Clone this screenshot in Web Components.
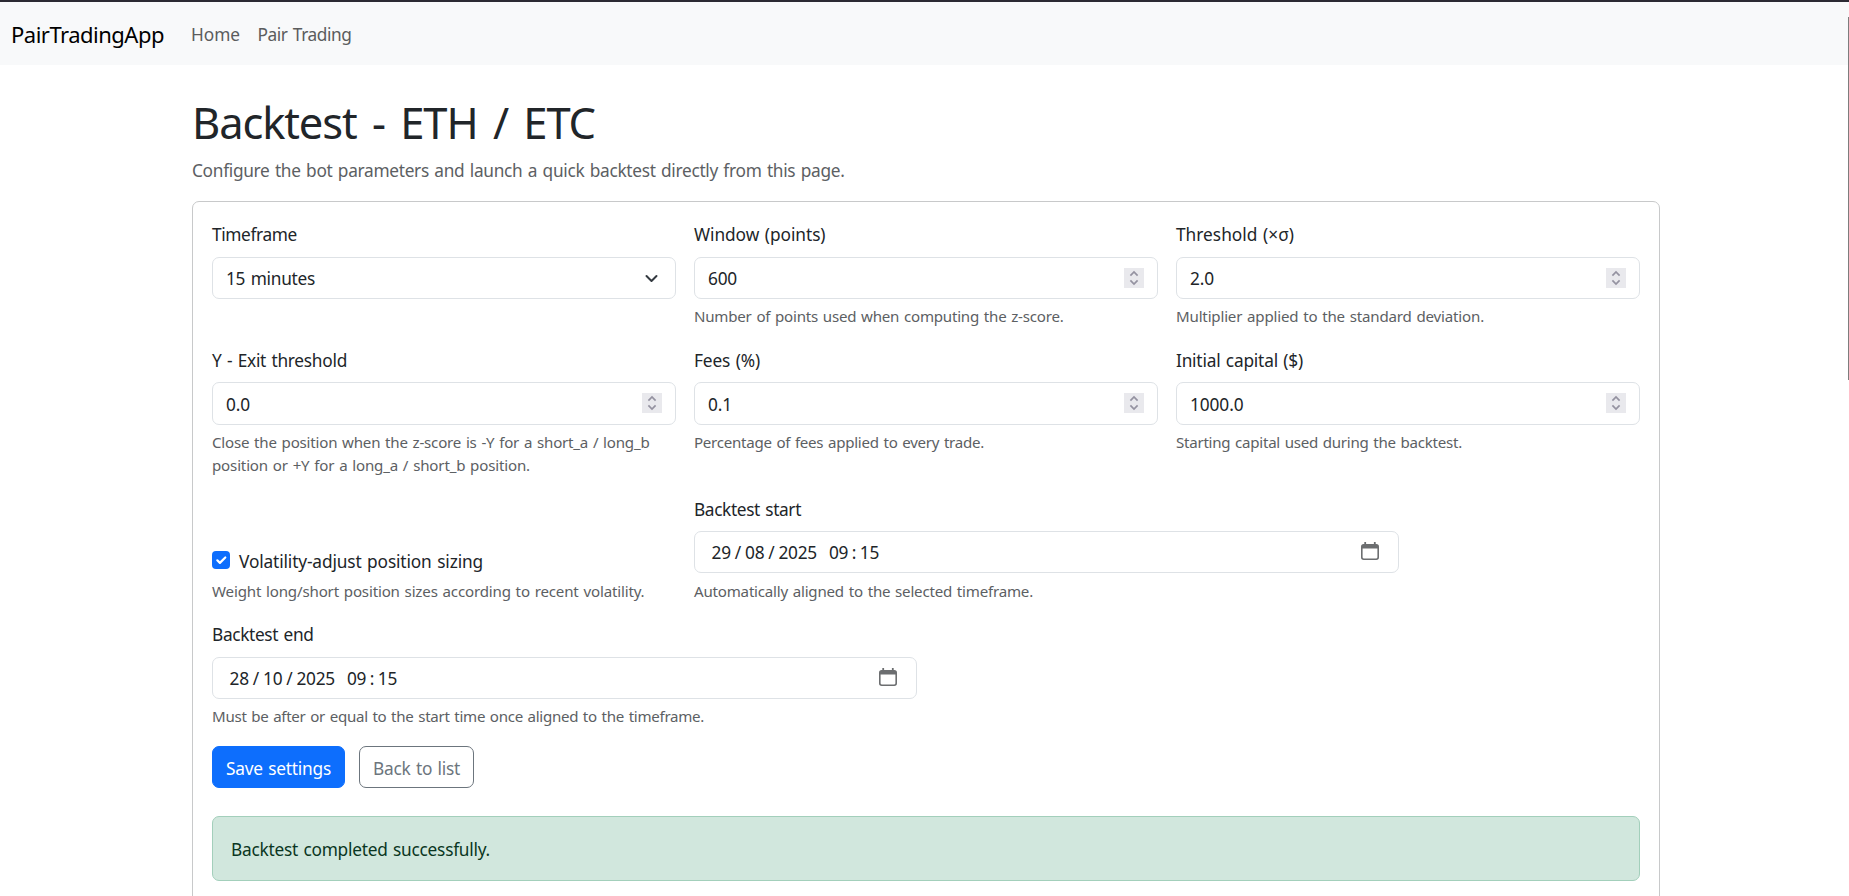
<!DOCTYPE html>
<html lang="en">
<head>
<meta charset="utf-8">
<title>PairTradingApp</title>
<style>
html,body{margin:0;height:100%;overflow:hidden;background:#fff}
body{font-family:"Noto Sans","Open Sans",sans-serif;font-size:17.3px;color:#212529}
</style>
</head>
<body>
<app-shell>
  <app-navbar slot="nav"></app-navbar>
  <page-heading heading="Backtest - ETH / ETC"><text-run w="652.5">Configure the bot parameters and launch a quick backtest directly from this page.</text-run></page-heading>
  <settings-card>
    <form-field><text-run slot="label" w="85">Timeframe</text-run><select-box><text-run w="89">15 minutes</text-run></select-box></form-field>
    <form-field><text-run slot="label" w="131.5">Window (points)</text-run><number-box><text-run w="29">600</text-run></number-box><text-run slot="help" w="369.5">Number of points used when computing the z-score.</text-run></form-field>
    <form-field><text-run slot="label" w="118">Threshold (×σ)</text-run><number-box><text-run w="24">2.0</text-run></number-box><text-run slot="help" w="308">Multiplier applied to the standard deviation.</text-run></form-field>
    <form-field><text-run slot="label" w="135">Y - Exit threshold</text-run><number-box low><text-run w="24">0.0</text-run></number-box><text-run slot="help" w="437.5">Close the position when the z-score is -Y for a short_a / long_b</text-run><text-run slot="help" w="318">position or +Y for a long_a / short_b position.</text-run></form-field>
    <form-field><text-run slot="label" w="66">Fees (%)</text-run><number-box low><text-run w="24">0.1</text-run></number-box><text-run slot="help" w="290">Percentage of fees applied to every trade.</text-run></form-field>
    <form-field><text-run slot="label" w="127">Initial capital ($)</text-run><number-box low><text-run w="53.5">1000.0</text-run></number-box><text-run slot="help" w="286">Starting capital used during the backtest.</text-run></form-field>
    <check-field><text-run w="244">Volatility-adjust position sizing</text-run><text-run slot="help" w="432.5">Weight long/short position sizes according to recent volatility.</text-run></check-field>
    <form-field wide><text-run slot="label" w="107">Backtest start</text-run><date-box day="29" month="08" year="2025" hour="09" minute="15"></date-box><text-run slot="help" w="339">Automatically aligned to the selected timeframe.</text-run></form-field>
    <form-field wide><text-run slot="label" w="101.5">Backtest end</text-run><date-box day="28" month="10" year="2025" hour="09" minute="15"></date-box><text-run slot="help" w="492">Must be after or equal to the start time once aligned to the timeframe.</text-run></form-field>
    <action-button slot="actions" primary style="width:133px"><text-run w="105">Save settings</text-run></action-button>
    <action-button slot="actions" style="width:115px"><text-run w="87">Back to list</text-run></action-button>
    <alert-box slot="alert"><text-run w="259">Backtest completed successfully.</text-run></alert-box>
  </settings-card>
</app-shell>
<script>
function define(name, html, setup){
  customElements.define(name, class extends HTMLElement{
    constructor(){
      super();
      this.attachShadow({mode:'open'}).innerHTML = html;
    }
    connectedCallback(){ if(setup) setup(this, this.shadowRoot); }
  });
}

define('app-shell', `<style>
:host{display:flex;flex-direction:column;height:100vh;overflow:hidden;box-sizing:border-box;border-top:2px solid #2b2a33;position:relative}
main{width:1468px;margin-left:192px}
.thumb{position:absolute;right:0;top:15px;width:1px;height:363px;background:#7d7d7d}
</style><slot name="nav"></slot><main><slot></slot></main><div class="thumb"></div>`);

define('app-navbar', `<style>
:host{display:flex;align-items:flex-start;height:63px;flex:none;background:#f8f9fa;box-sizing:border-box;padding:0 0 0 11px;line-height:34px}
.brand{font-size:22px;color:#000;width:180px;padding-top:14.5px}
.link{color:#5b5c5d;padding-top:16px}
.home{width:66.5px}
</style><span class="brand"><text-run w="153">PairTradingApp</text-run></span><span class="link home"><text-run w="49">Home</text-run></span><span class="link"><text-run w="94">Pair Trading</text-run></span>`);

define('page-heading', `<style>
:host{display:block;height:136px;box-sizing:border-box;padding-top:31px}
h1{margin:0;font-weight:400;font-size:43.5px;line-height:52px}
h1 text-run{--gap:.12em}
p{margin:9px 0 0;line-height:28px;color:#5c6063}
</style><h1><text-run w="403"></text-run></h1><p><slot></slot></p>`, (host, root) => {
  root.querySelector('text-run').textContent = host.getAttribute('heading');
});

define('settings-card', `<style>
:host{display:block;box-sizing:border-box;height:760px;border:1px solid #c8c9ca;border-radius:7px;padding:18px 19px}
.grid{display:grid;grid-template-columns:repeat(12,1fr);column-gap:18px;row-gap:16.6px}
.actions{display:flex;gap:14px;margin-top:17.5px}
.alert{margin-top:28px}
</style><div class="grid"><slot></slot></div><div class="actions"><slot name="actions"></slot></div><div class="alert"><slot name="alert"></slot></div>`);

define('form-field', `<style>
:host{display:block;grid-column:span 4}
:host([wide]){grid-column:span 6}
.label{box-sizing:border-box;line-height:28px;height:37px;padding-top:1.4px}
.help{display:flex;flex-direction:column;margin-top:6.2px;font-size:15.1px;line-height:23.33px;color:#5c6063}
</style><div class="label"><slot name="label"></slot></div><slot></slot><div class="help"><slot name="help"></slot></div>`);

const box = `:host{display:flex;align-items:center;justify-content:space-between;height:42.3px;box-sizing:border-box;border:1px solid #dee2e6;border-radius:7px;line-height:26px}`;

define('select-box', `<style>${box}
:host{padding:1px 17px 0 13px}svg{margin-top:-1px}
</style><slot></slot><svg width="13" height="9" viewBox="0 0 13 9" fill="none" stroke="#343a40" stroke-width="2" stroke-linecap="round" stroke-linejoin="round"><path d="M1.5 2l5 5 5-5"/></svg>`);

define('number-box', `<style>${box}
:host{padding:1px 13.5px 0 13px}svg{margin-top:-2px}
:host([low]){padding-top:2px}:host([low]) svg{margin-top:-3px}
</style><slot></slot><svg width="20" height="20" viewBox="0 0 20 20" fill="none" stroke="#9492a0" stroke-width="1.7"><path d="M0 0h20v20H0z" fill="#e9e9ed" stroke="none"/><path d="M6.4 7.6L10 4l3.6 3.6M6.4 12.4L10 16l3.6-3.6"/></svg>`);

define('date-box', `<style>${box}
:host{padding:0 19px 0 16.5px}
.value{display:flex;padding-top:2.4px}
.value span{display:block;text-align:center;white-space:pre;letter-spacing:-.3px}
.d{width:19.3px}.y{width:38.4px}.s{width:14.2px}.g{width:12px}.c{width:11.6px}
svg{margin-top:-2px}
</style><div class="value"></div><svg width="18" height="18" viewBox="0 0 18 18"><path fill="#6c6e70" fill-rule="evenodd" d="M3.3.3a.9.9 0 0 1 1.8 0V2h7.8V.3a.9.9 0 0 1 1.8 0V2h.6A2.7 2.7 0 0 1 18 4.7v10.6a2.7 2.7 0 0 1-2.7 2.7H2.7A2.7 2.7 0 0 1 0 15.3V4.7A2.7 2.7 0 0 1 2.7 2h.6zM1.6 6.5v8.800a1.100 1.100 0 0 0 1.100 1.100h12.600a1.100 1.100 0 0 0 1.100-1.100V6.500z"/></svg>`, (host, root) => {
  const a = n => host.getAttribute(n);
  const parts = [['d',a('day')],['s','/'],['d',a('month')],['s','/'],['y',a('year')],['g',''],['d',a('hour')],['c',':'],['d',a('minute')]];
  root.querySelector('.value').innerHTML = parts.map(([c,t]) => `<span class="${c}">${t}</span>`).join('');
});

define('check-field', `<style>
:host{display:flex;flex-direction:column;justify-content:flex-end;grid-column:span 4}
.row{display:flex;align-items:center;gap:9px;line-height:28px;height:28px}
svg{margin-top:-3px}
.help{margin-top:4px;font-size:15.1px;line-height:23.33px;color:#5c6063}
</style><div class="row"><svg width="18" height="18" viewBox="0 0 18 18"><rect width="18" height="18" rx="4" fill="#0d6efd"/><path d="M5.3 9.3l2.6 2.6 5.4-5.4" fill="none" stroke="#fff" stroke-width="2.2" stroke-linecap="round" stroke-linejoin="round"/></svg><slot></slot></div><div class="help"><slot name="help"></slot></div>`);

define('action-button', `<style>
:host{display:flex;align-items:center;justify-content:center;height:42px;box-sizing:border-box;border:1px solid #6c757d;border-radius:7px;color:#6c757d;padding-top:4px;line-height:26px}
:host([primary]){background:#0d6efd;border-color:#0d6efd;color:#fff}
</style><slot></slot>`);

define('alert-box', `<style>
:host{display:flex;align-items:center;height:65px;box-sizing:border-box;padding:2px 18px 0;background:#d1e7dd;border:1px solid #a3cfbb;border-radius:7px;color:#0a3622}
</style><slot></slot>`);

/* A single line of text tracked so that it spans the width given in "w". */
define('text-run', `<style>:host{display:inline-block;white-space:pre}span{display:inline-block;word-spacing:var(--gap,.07em)}</style><span><slot></slot></span>`, (host, root) => {
  requestAnimationFrame(fit); fit();
  function fit(){
    const s = root.querySelector('span');
    s.style.letterSpacing = '0';
    const n = [...host.textContent].length, w = s.getBoundingClientRect().width;
    if(n && w) s.style.letterSpacing = ((+host.getAttribute('w') - w) / n) + 'px';
  }
});
</script>
</body>
</html>
